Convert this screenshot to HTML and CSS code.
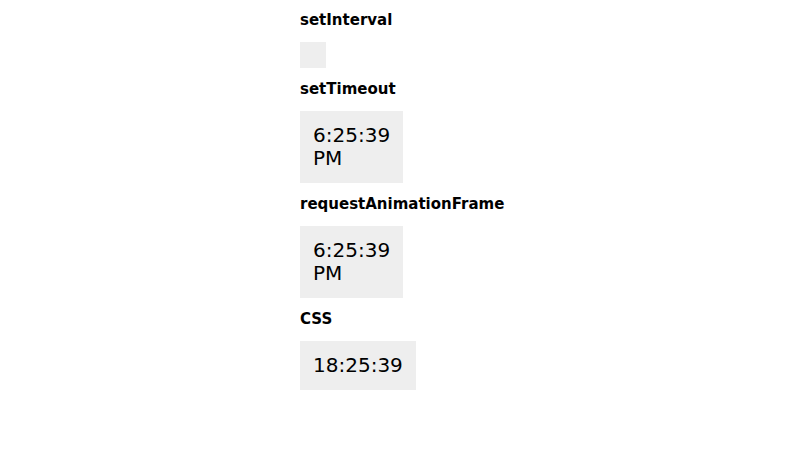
FILE: index.html
```html
<!DOCTYPE html>
<html>
<head>
<meta charset="utf-8">
<link rel="stylesheet" href="styles.css">
</head>
<body>
<main class="column">
  <div class="label first">setInterval</div>
  <div class="clock"></div>
  <div class="label">setTimeout</div>
  <div class="clock">6:25:39 PM</div>
  <div class="label">requestAnimationFrame</div>
  <div class="clock">6:25:39 PM</div>
  <div class="label">CSS</div>
  <div class="clock">18:25:39</div>
</main>
</body>
</html>
```
FILE: styles.css
```css
body {
  margin: 8px;
  font-family: "DejaVu Sans", sans-serif;
  color: #000;
  background: #fff;
}
.column {
  width: 200px;
  margin: 0 auto;
  display: flex;
  flex-direction: column;
  align-items: flex-start;
}
.label {
  font-size: 15px;
  font-weight: bold;
  line-height: 22px;
  margin: 10px 0 11px;
  white-space: nowrap;
}
.label.first {
  margin-top: 1px;
}
.clock {
  background: #eeeeee;
  padding: 13px;
  font-size: 20px;
  line-height: 23px;
  width: min-content;
}
.clock:empty {
  width: 0;
  height: 0;
}
```
